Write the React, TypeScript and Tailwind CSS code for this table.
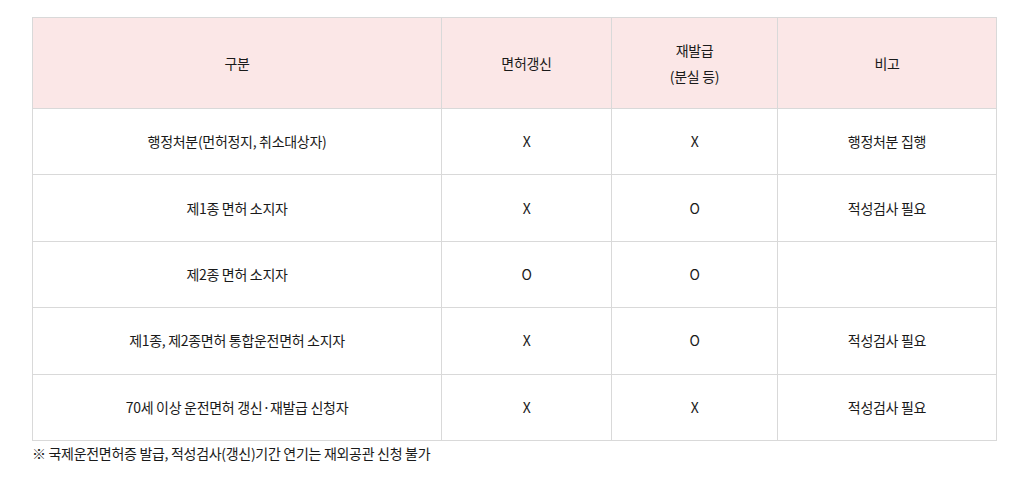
import React from 'react';

const rows = [
  { label: '행정처분(먼허정지, 취소대상자)', renew: 'X', reissue: 'X', note: '행정처분 집행' },
  { label: '제1종 면허 소지자', renew: 'X', reissue: 'O', note: '적성검사 필요' },
  { label: '제2종 면허 소지자', renew: 'O', reissue: 'O', note: '' },
  { label: '제1종, 제2종면허 통합운전면허 소지자', renew: 'X', reissue: 'O', note: '적성검사 필요' },
  { label: '70세 이상 운전면허 갱신·재발급 신청자', renew: 'X', reissue: 'X', note: '적성검사 필요' },
];

const App: React.FC = () => {
  return (
    <div
      className="w-[1024px] h-[478px] bg-white pt-[17px] px-[32px] text-[14px] tracking-[-0.3px] text-[#1a1a1a]"
      style={{ fontFamily: '"Noto Sans CJK KR", "Noto Sans", sans-serif' }}
    >
      <table className="w-[964px] border-collapse table-fixed text-center">
        <colgroup>
          <col className="w-[409px]" />
          <col className="w-[170px]" />
          <col className="w-[166px]" />
          <col className="w-[219px]" />
        </colgroup>
        <thead>
          <tr className="h-[91px] bg-[#fbe7e7]">
            <th className="border border-[#d9d9d9] font-normal">구분</th>
            <th className="border border-[#d9d9d9] font-normal">면허갱신</th>
            <th className="border border-[#d9d9d9] font-normal leading-[26px]">
              재발급
              <br />
              (분실 등)
            </th>
            <th className="border border-[#d9d9d9] font-normal">비고</th>
          </tr>
        </thead>
        <tbody>
          {rows.map((r, i) => (
            <tr key={i} className="h-[66.4px]">
              <td className="border border-[#d9d9d9]">{r.label}</td>
              <td className="border border-[#d9d9d9]">{r.renew}</td>
              <td className="border border-[#d9d9d9]">{r.reissue}</td>
              <td className="border border-[#d9d9d9]">{r.note}</td>
            </tr>
          ))}
        </tbody>
      </table>
      <p className="mt-[2px] leading-[20px]">※ 국제운전면허증 발급, 적성검사(갱신)기간 연기는 재외공관 신청 불가</p>
    </div>
  );
};

export default App;
